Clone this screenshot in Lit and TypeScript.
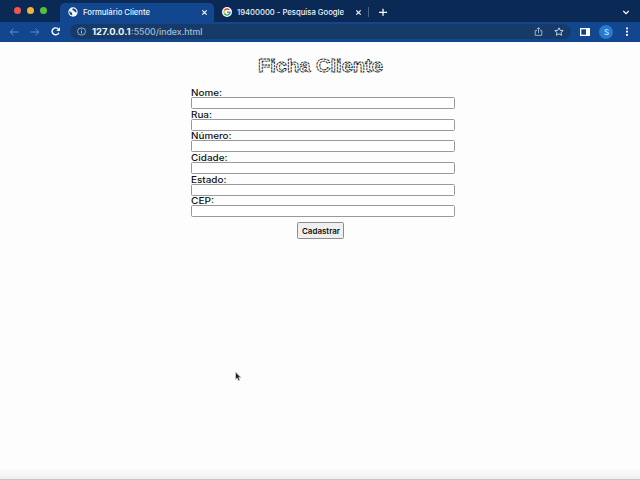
import { LitElement, html, css, svg } from "lit";
import { customElement, property } from "lit/decorators.js";

/* A single line of text stretched to a given width. */
@customElement("fit-text")
class FitText extends LitElement {
  @property() text = "";
  @property({ type: Number }) w = 50;
  @property({ type: Number }) size = 9;
  @property({ type: Number }) h = 12;
  @property({ type: Number }) base = 9;
  static styles = css`
    :host { display: block; flex: none; }
    svg { display: block; overflow: visible; }
    text { fill: currentColor; white-space: pre; stroke: var(--outline, none); stroke-width: .85px; stroke-dasharray: var(--dash, none); }
  `;
  render() {
    return html`<svg width=${this.w} height=${this.h}>
      ${svg`<text x="0" y=${this.base} font-size=${this.size} textLength=${this.w} lengthAdjust="spacingAndGlyphs">${this.text}</text>`}
    </svg>`;
  }
}

@customElement("browser-bar")
class BrowserBar extends LitElement {
  static styles = css`
    :host { display: block; height: 42px; color: #f0f5fc; background: #12478f; }
    svg { display: block; flex: none; overflow: visible; }
    .strip { display: flex; height: 22px; background: #0a2a55; align-items: flex-start; }
    .lights { display: flex; gap: 6px; padding: 7px 0 0 14px; width: 46px; }
    .dot { width: 7px; height: 7px; border-radius: 50%; }
    .red { background: #f2564d; }
    .amber { background: #f5b33c; }
    .green { background: #55c13b; }
    .tab { display: flex; align-items: center; box-sizing: border-box; height: 19px; margin-top: 3px; padding-bottom: 1px; }
    .active { width: 154px; padding-left: 8px; background: #12478f; border-radius: 5px 5px 0 0; }
    .other { width: 149px; padding-left: 8px; }
    .name { margin-left: 5px; font-weight: 500; }
    .x { margin-left: auto; margin-right: 7px; }
    .other .x { margin-right: 2px; }
    .sep { width: 1px; height: 10px; margin: 7px 10px 0 5px; background: #49648a; }
    .plus { margin-top: 8px; }
    .chev { margin: 10px 11px 0 auto; }
    .tools { display: flex; height: 20px; align-items: center; box-sizing: border-box; padding: 0 9px 1px 9px; }
    .nav { display: flex; width: 61px; gap: 11px; align-items: center; }
    .omni { display: flex; align-items: center; box-sizing: border-box; width: 501px; height: 15px; border-radius: 8px; background: #163b69; padding: 0 7px 0 7px; }
    .host { margin-left: 6px; font-weight: 700; }
    .path { color: #a9bcd5; font-weight: 500; }
    .share { margin-left: auto; margin-right: 11px; }
    .panel { margin-left: 9px; }
    .avatar { display: grid; place-items: center; width: 14px; height: 14px; border-radius: 50%; background: #267bd0; margin-left: 9px; }
    .dots { margin-left: auto; margin-right: 3px; }
  `;
  render() {
    return html`
      <div class="strip">
        <div class="lights"><i class="dot red"></i><i class="dot amber"></i><i class="dot green"></i></div>
        <div class="tab active">
          <svg width="10" height="10" viewBox="0 0 10 10"><circle cx="5" cy="5" r="4.7" fill="#f4f8ff"/><path d="M1.2 4.2l2 .9 1 1.4v1.8C2.3 8 1.2 6.3 1.2 4.2zM5 1.2l-.8 1.5.9.9 1.1.2.5 1.3 1.9.5c.3-2-1.1-4.2-3.6-4.4z" fill="#174781"/></svg>
          <fit-text class="name" text="Formulário Cliente" w="67" size="7.4" h="9" base="7.2"></fit-text>
          <svg class="x" width="5" height="5" viewBox="0 0 5 5"><path d="M.3.3l4.4 4.4M4.7.3L.3 4.7" stroke="#fff" stroke-width="1.1"/></svg>
        </div>
        <div class="tab other">
          <svg width="10" height="10" viewBox="0 0 10 10"><circle cx="5" cy="5" r="5" fill="#fff"/><g fill="none" stroke-width="1.5"><path d="M2.3 3.6A3.1 3.1 0 0 1 7.2 2.8" stroke="#ea4335"/><path d="M2.3 3.6A3.1 3.1 0 0 0 2.3 6.4" stroke="#fbbc05"/><path d="M2.3 6.4A3.1 3.1 0 0 0 7.1 7.3" stroke="#34a853"/><path d="M7.1 7.3A3.1 3.1 0 0 0 8.1 5.2H5" stroke="#4285f4"/></g></svg>
          <fit-text class="name" text="19400000 - Pesquisa Google" w="107" size="7.4" h="9" base="7.2"></fit-text>
          <svg class="x" width="5" height="5" viewBox="0 0 5 5"><path d="M.3.3l4.4 4.4M4.7.3L.3 4.7" stroke="#fff" stroke-width="1.1"/></svg>
        </div>
        <i class="sep"></i>
        <svg class="plus" width="8" height="8" viewBox="0 0 8 8"><path d="M0 4.3h8M4 .8v7" stroke="#fff" stroke-width="1.3"/></svg>
        <svg class="chev" width="6" height="5" viewBox="0 0 6 5"><path d="M.3 1L3 3.6 5.7 1" fill="none" stroke="#fff" stroke-width="1.2"/></svg>
      </div>
      <div class="tools">
        <div class="nav">
          <svg width="10" height="8" viewBox="0 0 10 8"><path d="M9.5 4H1M4.5.8L1 4l3.5 3.2" fill="none" stroke="#5f8cc8"/></svg>
          <svg width="10" height="8" viewBox="0 0 10 8"><path d="M.5 4H9M5.5.8L9 4 5.5 7.2" fill="none" stroke="#5f8cc8"/></svg>
          <svg width="10" height="9" viewBox="0 0 10 9"><path d="M7.5 2.2A3.6 3.4 0 1 0 7.9 5.8" fill="none" stroke="#fff" stroke-width="1.4"/><path d="M9 .3v3.6H5.3z" fill="#fff"/></svg>
        </div>
        <div class="omni">
          <svg width="9" height="9" viewBox="0 0 9 9"><ellipse cx="4.5" cy="4.5" rx="4" ry="3.6" fill="none" stroke="#b0c1d8" stroke-width=".8"/><path d="M4.5 4v2.5M4.5 2.4v.9" stroke="#b0c1d8"/></svg>
          <fit-text class="host" text="127.0.0.1" w="38.5" size="8.4" h="10" base="8"></fit-text>
          <fit-text class="path" text=":5500/index.html" w="71.5" size="8.4" h="10" base="8"></fit-text>
          <svg class="share" width="9" height="9" viewBox="0 0 9 9"><path d="M3 3.6H1.2v4.7h6.6V3.6H6M4.5 6V.8M2.8 2.2L4.5.7l1.7 1.5" fill="none" stroke="#a9bbd3" stroke-width=".9"/></svg>
          <svg width="10" height="9" viewBox="0 0 10 9"><path d="M5 .8l1.2 2.5 3 .3L7 5.5l.6 2.8L5 6.8 2.4 8.3 3 5.5.8 3.6l3-.3z" fill="none" stroke="#cbd7e7" stroke-width=".95"/></svg>
        </div>
        <svg class="panel" width="10" height="8" viewBox="0 0 10 8"><path d="M0 0h10v8H0z" fill="#fff"/><path d="M1.3 1.3h4.7v5.4H1.3z" fill="#124680"/></svg>
        <div class="avatar"><fit-text text="S" w="5" size="7" h="8" base="6.6"></fit-text></div>
        <svg class="dots" width="2" height="9" viewBox="0 0 2 9"><path d="M0 .5h2v1.7H0zM0 3.8h2v1.7H0zM0 7.1h2v1.7H0z" fill="#fff"/></svg>
      </div>`;
  }
}

@customElement("app-root")
class AppRoot extends LitElement {
  static styles = css`
    :host { display: block; position: relative; box-sizing: border-box; width: 640px; height: 480px; overflow: hidden; background: #fdfdfd; color: #111; font-family: Inter, "Liberation Sans", sans-serif; }
    .title { --outline: #151515; --dash: 2.4px .7px; width: 125px; margin: 12px 0 0 258px; color: #fff; font-family: "Liberation Sans", Arial, sans-serif; font-weight: 700; }
    form { width: 264px; margin: 9px 0 0 191px; }
    .field { height: 21.7px; font-weight: 500; }
    .field input { display: block; box-sizing: border-box; width: 264px; height: 12px; padding: 0; border: 1px solid #999; border-radius: 1.5px; background: #fff; }
    button { display: grid; place-items: center; width: 47px; height: 17px; margin: 5px 0 0 106px; padding: 1px 0 0; border: 1px solid #8c8c8c; border-radius: 1.5px; background: #efefef; color: #111; font-family: inherit; font-weight: 600; }
    .cursor { position: absolute; left: 234px; top: 371px; }
    .fade { position: absolute; left: 0; right: 0; bottom: 0; height: 12px; box-sizing: border-box; border-bottom: 1px solid #c6c6c6; background: linear-gradient(#fdfdfd, #efefef); }
  `;
  fields: [string, number][] = [
    ["Nome:", 31], ["Rua:", 21], ["Número:", 40.5], ["Cidade:", 36.5], ["Estado:", 35.5], ["CEP:", 23],
  ];
  render() {
    return html`
      <browser-bar></browser-bar>
      <fit-text class="title" text="Ficha Cliente" w="125" size="18.5" h="24" base="17.5"></fit-text>
      <form @submit=${(e: Event) => e.preventDefault()}>
        ${this.fields.map(([name, w]) => html`
          <div class="field">
            <fit-text text=${name} w=${w} size="9" h="10" base="8.8"></fit-text>
            <input aria-label=${name} />
          </div>`)}
        <button><fit-text text="Cadastrar" w="38" size="7.8" h="9" base="7.4"></fit-text></button>
      </form>
      <div class="fade"></div>
      <svg class="cursor" width="8" height="11" viewBox="0 0 8 11"><path d="M1.5 1v7.5l1.7-1.4 1.2 2.7 1.4-.7-1.1-2.5H7z" fill="#222" stroke="#ccc" stroke-width=".8"/></svg>`;
  }
}
